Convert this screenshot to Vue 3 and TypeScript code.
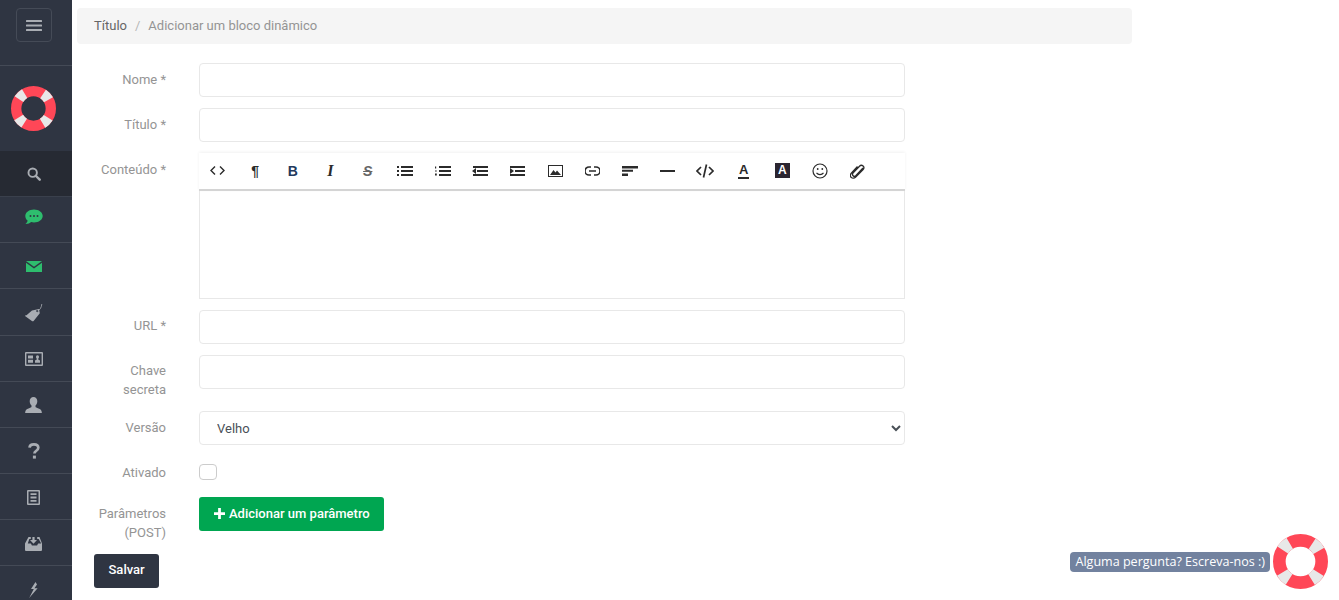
<template>
  <div class="layout">
    <aside class="sidebar">
      <div class="sidebar-top">
        <button class="burger" aria-label="Menu">
          <svg width="16" height="11" viewBox="0 0 16 11" fill="currentColor">
            <rect y="0" width="16" height="2" rx=".5" />
            <rect y="4.500" width="16" height="2" rx=".5" />
            <rect y="9" width="16" height="2" rx=".5" />
          </svg>
        </button>
      </div>
      <div class="sidebar-logo">
        <svg width="45" height="45" viewBox="0 0 100 100" fill="none">
          <circle cx="50" cy="50" r="38.500" stroke="#ff4757" stroke-width="23" />
          <circle cx="50" cy="50" r="38.500" stroke="#e8e8e8" stroke-width="23" pathLength="360" stroke-dasharray="26 64" stroke-dashoffset="-32" />
        </svg>
      </div>
      <nav class="sidebar-nav">
        <a class="nav-item active">
          <svg width="14" height="14" viewBox="0 0 16 16" fill="none" stroke="currentColor">
            <circle cx="6.500" cy="6.500" r="4.800" stroke-width="2.200" />
            <path d="M10 10l4.500 4.500" stroke-width="2.800" stroke-linecap="round" />
          </svg>
        </a>
        <a class="nav-item green">
          <svg class="icon-up" width="18" height="16" viewBox="0 0 18 16" fill="currentColor">
            <path d="M9 .5c4.800 0 8.700 2.900 8.700 6.500S13.800 13.500 9 13.500c-1 0-2-.1-2.900-.4C4.800 14.400 3 15.200.5 15.100c1.100-.9 2-2.300 2.100-3.500C1.100 10.400.3 8.800.3 7 .3 3.400 4.200.5 9 .5z" />
            <circle cx="5.500" cy="7" r="1" fill="#2f3542" />
            <circle cx="9" cy="7" r="1" fill="#2f3542" />
            <circle cx="12.500" cy="7" r="1" fill="#2f3542" />
          </svg>
        </a>
        <a class="nav-item green">
          <svg width="16" height="11" viewBox="0 0 16 11" fill="currentColor">
            <path d="M0 0h16L8 5.800z" />
            <path d="M0 1.800l8 5.800 8-5.800V11H0z" />
          </svg>
        </a>
        <a class="nav-item">
          <svg width="18" height="18" viewBox="0 0 18 18" fill="currentColor">
            <path fill-rule="evenodd" d="M1.500 11.200L7 6.500l7-1.500.8 4.200-6 7.600c-.5.600-1.300.700-1.900.2l-6.200-4.600c-.6-.5-.7-.6-.2-1.200zM12.300 8.200a1.100 1.100 0 1 0 0-2.200 1.100 1.100 0 0 0 0 2.200z" />
            <path d="M12.500 7C15 6 16.500 3.500 16.800 0" fill="none" stroke="currentColor" stroke-width=".8" />
          </svg>
        </a>
        <a class="nav-item">
          <svg width="18" height="14" viewBox="0 0 18 14" fill="currentColor">
            <path fill-rule="evenodd" d="M1 0h16a1 1 0 0 1 1 1v12a1 1 0 0 1-1 1H1a1 1 0 0 1-1-1V1a1 1 0 0 1 1-1zm.4 1.400v11.200h15.200V1.400z" />
            <path d="M3 3.500h5v3H3zM3 7.800h5v3H3z" />
            <path d="M12.500 3.300a1.500 1.500 0 0 1 1.500 1.700c0 .9-.4 1.500-.8 1.800v.7l1.800.9v2.300H10V8.400l1.800-.9v-.7c-.4-.3-.8-.9-.8-1.800a1.500 1.500 0 0 1 1.500-1.700z" />
          </svg>
        </a>
        <a class="nav-item">
          <svg width="17" height="16" viewBox="0 0 17 16" fill="currentColor">
            <path d="M8.500 0c2.300 0 3.800 1.800 3.800 4.300 0 1.700-.8 3.400-1.800 4.300v1.200c0 .6 1.300 1 3 1.700 1.800.7 3.200 1.400 3.400 4.500H.1c.2-3.100 1.600-3.800 3.400-4.500 1.700-.7 3-1.100 3-1.700V8.600c-1-.9-1.800-2.600-1.800-4.300C4.700 1.800 6.200 0 8.500 0z" />
          </svg>
        </a>
        <a class="nav-item">
          <svg width="12" height="16" viewBox="0 0 12 16" fill="none" stroke="currentColor">
            <path d="M1.500 4.600C1.700 2.500 3.400 1.400 5.900 1.400c2.600 0 4.400 1.300 4.400 3.400 0 3-3.900 2.900-3.900 5.700" stroke-width="2.700" />
            <rect x="4.900" y="12.600" width="3" height="3" fill="currentColor" stroke="none" />
          </svg>
        </a>
        <a class="nav-item">
          <svg width="13" height="15" viewBox="0 0 13 15" fill="currentColor">
            <path fill-rule="evenodd" d="M1 0h11a1 1 0 0 1 1 1v13a1 1 0 0 1-1 1H1a1 1 0 0 1-1-1V1a1 1 0 0 1 1-1zm.5 1.500v12h10v-12z" />
            <path d="M3.500 3.300h6v1.800h-6zM3.500 6.600h6v1.800h-6zM3.500 9.900h6v1.800h-6z" />
          </svg>
        </a>
        <a class="nav-item">
          <svg width="17" height="14" viewBox="0 0 17 14" fill="currentColor">
            <path d="M3.500 0h2.300v2H4.300L2.800 6.500h3.100l1 2h5.200l1-2h3.100L13.700 2h-1.500V0h2.300L17 6.500V13a1 1 0 0 1-1 1H1a1 1 0 0 1-1-1V6.500z" />
            <path d="M7.400 0h2.200v3H12L8.500 6.800 5 3h2.400z" />
          </svg>
        </a>
        <a class="nav-item">
          <svg width="9" height="16" viewBox="0 0 9 16" fill="currentColor">
            <path d="M6.500 0L2 7h2.800L.2 16l8.400-9.800H5.400L8 2.400z" />
          </svg>
        </a>
      </nav>
    </aside>

    <main class="content">
      <div class="breadcrumb">
        <span class="crumb-root">Título</span>
        <span class="crumb-sep">/</span>
        <span class="crumb-current">Adicionar um bloco dinâmico</span>
      </div>

      <form class="form" @submit.prevent>
        <div class="form-row">
          <label class="form-label">Nome *</label>
          <input class="form-control" type="text" />
        </div>
        <div class="form-row">
          <label class="form-label">Título *</label>
          <input class="form-control" type="text" />
        </div>
        <div class="form-row">
          <label class="form-label">Conteúdo *</label>
          <div class="editor">
            <div class="editor-toolbar">
              <span class="tool">
                <svg width="15" height="9" viewBox="0 0 15 9" fill="none" stroke="currentColor" stroke-width="1.400"><path d="M5 .5l-4 4 4 4M10 .5l4 4-4 4" /></svg>
              </span>
              <span class="tool tool-text">¶</span>
              <span class="tool tool-text tool-blue">B</span>
              <span class="tool tool-text tool-italic">I</span>
              <span class="tool tool-text tool-strike">S</span>
              <span class="tool">
                <svg width="16" height="10" viewBox="0 0 16 10" fill="currentColor"><path d="M0 0h2v2H0zM0 4h2v2H0zM0 8h2v2H0zM4 0h12v2H4zM4 4h12v2H4zM4 8h12v2H4z" /></svg>
              </span>
              <span class="tool">
                <svg width="16" height="10" viewBox="0 0 16 10" fill="currentColor"><path d="M0 .5h1.200v2H0zM0 4.500h1.800v1H0zM0 7.500h1.800v2H0zM4 0h12v2H4zM4 4h12v2H4zM4 8h12v2H4z" /></svg>
              </span>
              <span class="tool">
                <svg width="16" height="10" viewBox="0 0 16 10" fill="currentColor"><path d="M0 5l4-3v6zM1 0h15v2H1zM5 4h11v2H5zM1 8h15v2H1z" /></svg>
              </span>
              <span class="tool">
                <svg width="16" height="10" viewBox="0 0 16 10" fill="currentColor"><path d="M4 5L0 2v6zM0 0h15v2H0zM5 4h10v2H5zM0 8h15v2H0z" /></svg>
              </span>
              <span class="tool">
                <svg width="15" height="12" viewBox="0 0 15 12" fill="currentColor"><path fill-rule="evenodd" d="M0 0h15v12H0zm1 1v10h13V1z" /><path d="M2 10l3.500-5 2 2.500L9 5.500l4 4.500z" /></svg>
              </span>
              <span class="tool">
                <svg width="15" height="10" viewBox="0 0 15 10" fill="none" stroke="currentColor" stroke-width="1.600"><path d="M6 1H4a4 4 0 0 0 0 8h2M9 1h2a4 4 0 0 1 0 8H9M4 5h7" /></svg>
              </span>
              <span class="tool">
                <svg width="16" height="10" viewBox="0 0 16 10" fill="currentColor"><path d="M0 0h16v2.500H0zM0 3.800h11v2H0zM0 7.500h6v2.500H0z" /></svg>
              </span>
              <span class="tool">
                <svg width="15" height="2" viewBox="0 0 15 2" fill="currentColor"><rect width="15" height="2" /></svg>
              </span>
              <span class="tool">
                <svg width="18" height="14" viewBox="0 0 18 14" fill="none" stroke="currentColor" stroke-width="1.700"><path d="M5 3L1 7l4 4M13 3l4 4-4 4M10.500.5l-3 13" /></svg>
              </span>
              <span class="tool tool-color"><span class="tool-a">A</span></span>
              <span class="tool tool-bg"><span class="tool-a-bg">A</span></span>
              <span class="tool">
                <svg width="16" height="16" viewBox="0 0 16 16" fill="none" stroke="currentColor" stroke-width="1.200"><circle cx="8" cy="8" r="7" /><path d="M4.500 9.800c1.800 2.300 5.200 2.300 7 0" /><circle cx="5.700" cy="6" r=".9" fill="currentColor" stroke="none" /><circle cx="10.300" cy="6" r=".9" fill="currentColor" stroke="none" /></svg>
              </span>
              <span class="tool">
                <svg width="15" height="16" viewBox="0 0 15 16" fill="none" stroke="currentColor" stroke-width="1.300"><path d="M13 5L6 12.500c-1 1-2.300.8-2.900.2-.8-.8-.7-1.900.1-2.800l6.300-6.700c1.100-1.200 2.700-1 3.600-.2.900.9 1 2.500-.2 3.700L5.700 14c-1.600 1.700-3.500 1.400-4.500.4-1-1-1.200-2.800.3-4.400L7.500 3.500" /></svg>
              </span>
            </div>
            <div class="editor-body"></div>
          </div>
        </div>
        <div class="form-row">
          <label class="form-label form-label-up">URL *</label>
          <input class="form-control" type="text" />
        </div>
        <div class="form-row">
          <label class="form-label form-label-up">Chave secreta</label>
          <input class="form-control" type="text" />
        </div>
        <div class="form-row">
          <label class="form-label">Versão</label>
          <select class="form-control form-select">
            <option>Velho</option>
          </select>
        </div>
        <div class="form-row form-row-check">
          <label class="form-label">Ativado</label>
          <span class="checkbox"></span>
        </div>
        <div class="form-row form-row-params">
          <label class="form-label">Parâmetros (POST)</label>
          <div>
            <button type="button" class="btn btn-green">
              <svg width="11" height="11" viewBox="0 0 12 12" fill="currentColor"><path d="M4.500 0h3v4.500H12v3H7.500V12h-3V7.500H0v-3h4.500z" /></svg>
              Adicionar um parâmetro
            </button>
          </div>
        </div>
        <button type="submit" class="btn btn-dark">Salvar</button>
      </form>
    </main>

    <div class="help-widget">
      <span class="help-label">Alguma pergunta? Escreva-nos :)</span>
      <svg width="55" height="55" viewBox="0 0 100 100" fill="none">
        <circle cx="50" cy="50" r="38.500" stroke="#ff4757" stroke-width="23" />
        <circle cx="50" cy="50" r="38.500" stroke="#e8e8e8" stroke-width="23" pathLength="360" stroke-dasharray="26 64" stroke-dashoffset="-32" />
      </svg>
    </div>
  </div>
</template>

<script setup lang="ts">
</script>

<style>
html,
body {
  margin: 0;
  overflow: hidden;
  background: #fff;
}
</style>

<style scoped>
.layout {
  display: flex;
  height: 600px;
  overflow: hidden;
  font-family: Roboto, "Liberation Sans", sans-serif;
  font-size: 13px;
  color: #495057;
}

.sidebar {
  flex: none;
  width: 72px;
  background: #2f3542;
  color: #a9adb3;
}

.sidebar-top {
  height: 66px;
  padding: 8px 4px 0 0;
  box-sizing: border-box;
  border-bottom: 1px solid #444a56;
  display: flex;
  justify-content: center;
  align-items: flex-start;
}

.burger {
  width: 36px;
  height: 34px;
  padding: 0;
  display: flex;
  align-items: center;
  justify-content: center;
  background: transparent;
  border: 1px solid #454b57;
  border-radius: 4px;
  color: #a9adb3;
}

.sidebar-logo {
  height: 85px;
  padding-right: 5px;
  display: flex;
  align-items: center;
  justify-content: center;
}

.nav-item {
  display: flex;
  align-items: center;
  justify-content: center;
  height: 46.150px;
  padding: 2px 5px 0 0;
  box-sizing: border-box;
  border-bottom: 1px solid #444a56;
}

.nav-item.active {
  padding-top: 0;
  background: #262a33;
  border-bottom-color: #3a404c;
}

.nav-item.green {
  color: #2ebd6e;
}

.icon-up {
  margin-bottom: 7px;
}

.content {
  flex: none;
  width: 1055px;
  margin-left: 5px;
  padding-top: 8px;
}

.breadcrumb {
  display: flex;
  align-items: center;
  box-sizing: border-box;
  height: 36px;
  padding: 0 17px 2px;
  background: #f5f5f5;
  border-radius: 4px;
}

.crumb-root {
  color: #666;
}

.crumb-sep {
  margin: 0 8px;
  color: #b5b5b5;
}

.crumb-current {
  color: #949494;
}

.form {
  width: 828px;
  margin-top: 19px;
  margin-left: 17px;
}

.form-row {
  display: grid;
  grid-template-columns: 72px 706px;
  column-gap: 33px;
  margin-bottom: 11px;
}

.form-label {
  padding-top: 7px;
  text-align: right;
  line-height: 19px;
  color: #949494;
}

.form-label-up {
  padding: 6px 0 1px;
}

.form-control {
  display: block;
  box-sizing: border-box;
  width: 100%;
  height: 34px;
  padding: 0 12px;
  background: #fff;
  border: 1px solid #e8e8e8;
  border-radius: 4px;
  outline: none;
  font: inherit;
  color: #495057;
}

.form-select {
  padding-left: 13px;
}

.editor-toolbar {
  display: flex;
  align-items: center;
  box-sizing: border-box;
  height: 38px;
  padding-bottom: 1px;
  background: #fff;
  border-bottom: 2px solid #d4d4d4;
  box-shadow: 0 -1px 3px rgba(0, 0, 0, 0.06);
}

.tool {
  flex: none;
  width: 37.500px;
  display: flex;
  align-items: center;
  justify-content: center;
  color: #2b2b2b;
}

.tool-color,
.tool-bg {
  margin-left: 1px;
}

.tool-text {
  font-family: "Liberation Sans", sans-serif;
  font-size: 14px;
  font-weight: 700;
}

.tool-blue {
  color: #23395d;
}

.tool-italic {
  font-family: "Liberation Serif", serif;
  font-style: italic;
  font-size: 16px;
}

.tool-strike {
  color: #666;
  text-decoration: line-through;
  font-style: italic;
}

.tool-a {
  font-family: "Liberation Sans", sans-serif;
  font-size: 13px;
  font-weight: 700;
  line-height: 14px;
  border-bottom: 2px solid #2b2b2b;
  padding: 0 1px;
}

.tool-a-bg {
  width: 15px;
  height: 15px;
  background: #2b2530;
  color: #fff;
  font-family: "Liberation Sans", sans-serif;
  font-size: 12px;
  font-weight: 700;
  line-height: 15px;
  text-align: center;
}

.editor-body {
  height: 108px;
  box-sizing: border-box;
  border: 1px solid #e8e8e8;
  border-top: 0;
}

.form-row-check {
  height: 30px;
}

.checkbox {
  display: block;
  box-sizing: border-box;
  width: 18px;
  height: 16px;
  margin-top: 8px;
  border: 1px solid #ccc;
  border-radius: 4px;
}

.form-row-params {
  margin-bottom: 12px;
}

.btn {
  display: inline-flex;
  align-items: center;
  height: 34px;
  border: 0;
  border-radius: 3px;
  color: #fff;
  font: inherit;
  font-weight: 500;
}

.btn-green {
  gap: 4px;
  padding: 0 14px 2px 15px;
  background: #00a651;
}

.btn-dark {
  padding: 0 14.500px 3px;
  background: #2f3542;
}

.help-widget {
  position: absolute;
  right: 11px;
  bottom: 11px;
  display: flex;
  align-items: center;
  gap: 3px;
}

.help-label {
  padding: 0 5px;
  height: 20px;
  line-height: 20px;
  background: #72829f;
  border-radius: 4px;
  color: #fff;
  font-family: "Open Sans", sans-serif;
  font-size: 12.550px;
  white-space: nowrap;
}
</style>
